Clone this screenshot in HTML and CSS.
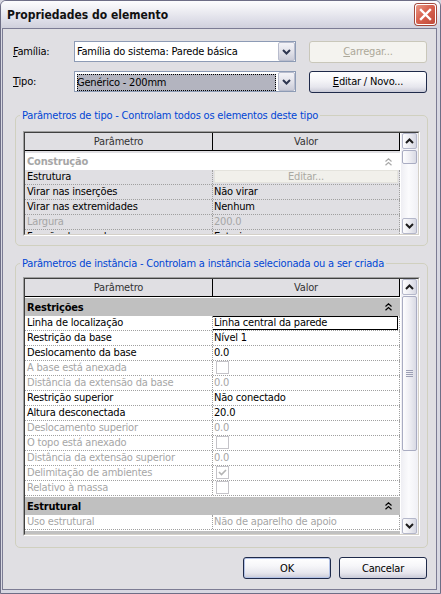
FILE: index.html
```html
<!DOCTYPE html>
<html lang="pt">
<head>
<meta charset="utf-8">
<title>Propriedades do elemento</title>
<link rel="stylesheet" href="styles.css">
</head>
<body>
<div class="window">
  <div class="titlebar">
    <span class="title">Propriedades do elemento</span>
    <span class="close"><svg width="13" height="13" viewBox="0 0 13 13"><path d="M2 2L11 11M11 2L2 11" stroke="#fff" stroke-width="2.4" stroke-linecap="square"/></svg></span>
  </div>
  <div class="client">
    <div class="form">
      <span class="lbl"><u>F</u>amília:</span>
      <div class="combo">
        <span class="combo-text">Família do sistema: Parede básica</span>
        <span class="dd"><svg width="9" height="6" viewBox="0 0 9 6"><path d="M1 1L4.5 4.5L8 1" fill="none" stroke="#2e3650" stroke-width="2"/></svg></span>
      </div>
      <button class="btn dis"><u>C</u>arregar...</button>
      <span class="lbl"><u>T</u>ipo:</span>
      <div class="combo">
        <span class="combo-text sel">Genérico - 200mm</span>
        <span class="dd"><svg width="9" height="6" viewBox="0 0 9 6"><path d="M1 1L4.5 4.5L8 1" fill="none" stroke="#2e3650" stroke-width="2"/></svg></span>
      </div>
      <button class="btn"><u>E</u>ditar / Novo...</button>
    </div>

    <fieldset class="group g1">
      <legend>Parâmetros de tipo - Controlam todos os elementos deste tipo</legend>
      <div class="grid gh1">
        <div class="gin">
          <div class="table tgray">
            <div class="hdr"><div class="hc hc1">Parâmetro</div><div class="hc hc2">Valor</div></div>
            <div class="cat cwhite dis"><span>Construção</span><svg class="chev" width="7" height="8" viewBox="0 0 7 8"><path d="M0.5 3.5L3.5 0.8L6.5 3.5M0.5 7.3L3.5 4.6L6.5 7.3" fill="none" stroke="#a8a8a8" stroke-width="1.2"/></svg></div>
            <div class="row"><div class="c1">Estrutura</div><div class="c2"><span class="editbtn">Editar...</span></div></div>
            <div class="row"><div class="c1">Virar nas inserções</div><div class="c2">Não virar</div></div>
            <div class="row"><div class="c1">Virar nas extremidades</div><div class="c2">Nenhum</div></div>
            <div class="row dis"><div class="c1">Largura</div><div class="c2">200.0</div></div>
            <div class="row"><div class="c1">Função da parede</div><div class="c2">Exterior</div></div>
          </div>
          <div class="sb">
            <span class="sbb"><svg width="9" height="6" viewBox="0 0 9 6"><path d="M1 5L4.5 1.5L8 5" fill="none" stroke="#1c1c1c" stroke-width="2"/></svg></span>
            <div class="track"><span class="thumb th1"></span></div>
            <span class="sbb"><svg width="9" height="6" viewBox="0 0 9 6"><path d="M1 1L4.5 4.5L8 1" fill="none" stroke="#1c1c1c" stroke-width="2"/></svg></span>
          </div>
        </div>
      </div>
    </fieldset>

    <fieldset class="group g2">
      <legend>Parâmetros de instância - Controlam a instância selecionada ou a ser criada</legend>
      <div class="grid gh2">
        <div class="gin">
          <div class="table twhite">
            <div class="hdr"><div class="hc hc1">Parâmetro</div><div class="hc hc2">Valor</div></div>
            <div class="cat cgray"><span>Restrições</span><svg class="chev" width="7" height="8" viewBox="0 0 7 8"><path d="M0.5 3.5L3.5 0.8L6.5 3.5M0.5 7.3L3.5 4.6L6.5 7.3" fill="none" stroke="#000" stroke-width="1.2"/></svg></div>
            <div class="row"><div class="c1">Linha de localização</div><div class="c2"><span class="editbox">Linha central da parede</span></div></div>
            <div class="row"><div class="c1">Restrição da base</div><div class="c2">Nível 1</div></div>
            <div class="row"><div class="c1">Deslocamento da base</div><div class="c2">0.0</div></div>
            <div class="row dis"><div class="c1">A base está anexada</div><div class="c2"><span class="chk"></span></div></div>
            <div class="row dis"><div class="c1">Distância da extensão da base</div><div class="c2">0.0</div></div>
            <div class="row"><div class="c1">Restrição superior</div><div class="c2">Não conectado</div></div>
            <div class="row"><div class="c1">Altura desconectada</div><div class="c2">20.0</div></div>
            <div class="row dis"><div class="c1">Deslocamento superior</div><div class="c2">0.0</div></div>
            <div class="row dis"><div class="c1">O topo está anexado</div><div class="c2"><span class="chk"></span></div></div>
            <div class="row dis"><div class="c1">Distância da extensão superior</div><div class="c2">0.0</div></div>
            <div class="row dis"><div class="c1">Delimitação de ambientes</div><div class="c2"><span class="chk"><svg width="11" height="11" viewBox="0 0 11 11"><path d="M2 5L4.5 7.5L9 3" fill="none" stroke="#b4b4b4" stroke-width="1.6"/></svg></span></div></div>
            <div class="row dis"><div class="c1">Relativo à massa</div><div class="c2"><span class="chk"></span></div></div>
            <div class="cat cgray"><span>Estrutural</span><svg class="chev" width="7" height="8" viewBox="0 0 7 8"><path d="M0.5 3.5L3.5 0.8L6.5 3.5M0.5 7.3L3.5 4.6L6.5 7.3" fill="none" stroke="#000" stroke-width="1.2"/></svg></div>
            <div class="row dis"><div class="c1">Uso estrutural</div><div class="c2">Não de aparelho de apoio</div></div>
            <div class="cat cgray"></div>
          </div>
          <div class="sb">
            <span class="sbb"><svg width="9" height="6" viewBox="0 0 9 6"><path d="M1 5L4.5 1.5L8 5" fill="none" stroke="#1c1c1c" stroke-width="2"/></svg></span>
            <div class="track"><span class="thumb th2"><span class="grip"></span></span></div>
            <span class="sbb"><svg width="9" height="6" viewBox="0 0 9 6"><path d="M1 1L4.5 4.5L8 1" fill="none" stroke="#1c1c1c" stroke-width="2"/></svg></span>
          </div>
        </div>
      </div>
    </fieldset>

    <div class="buttons">
      <button class="btn bw def">OK</button>
      <button class="btn bw">Cancelar</button>
    </div>
  </div>
</div>
</body>
</html>
```
FILE: styles.css
```css
* { box-sizing: border-box; }
html, body { margin: 0; padding: 0; }
body {
  width: 441px; height: 594px; overflow: hidden;
  background: #d6d6e0;
  font-family: "DejaVu Sans Condensed", "DejaVu Sans", sans-serif;
  font-stretch: condensed;
  font-size: 11px; line-height: 13px; color: #000;
  letter-spacing: -0.2px;
}
.window {
  width: 441px; height: 594px;
  display: flex; flex-direction: column;
  border: 1px solid #6e6e86;
  border-radius: 6px 6px 0 0;
  background: #d8d8e2;
  padding: 0 3px 3px 1px;
}
.titlebar {
  height: 27px; flex: none;
  margin: 0 -3px 0 -1px;
  padding: 0 4px 0 6px;
  display: flex; align-items: center; justify-content: space-between;
  border-radius: 5px 5px 0 0;
  background: linear-gradient(#fdfdfe 0%, #eeeef3 35%, #dedee8 70%, #d0d0dc 100%);
}
.title { font-weight: bold; font-size: 12px; line-height: 15px; color: #111; padding-top: 1px; letter-spacing: 0; }
.close {
  width: 21px; height: 21px;
  display: flex; align-items: center; justify-content: center;
  border: 1px solid #fff; border-radius: 3px;
  background: linear-gradient(135deg, #e99a88 0%, #d8624f 45%, #c04a3a 100%);
  box-shadow: 0 0 0 1px #a4493c;
}
.client {
  flex: 1; min-height: 0;
  background: #e0dfe3;
  border: 1px solid #7c7c94;
  padding: 12px 8px 0 10px;
  display: flex; flex-direction: column;
}
.form {
  display: grid;
  grid-template-columns: 61px 222px 131px;
  grid-auto-rows: 21px;
  row-gap: 9px;
  align-items: center;
}
.lbl { white-space: nowrap; }
.combo {
  height: 21px;
  display: flex; align-items: center;
  background: #fff;
  border: 1px solid #8d9bb5;
  padding: 0 0 0 2px;
}
.combo-text { flex: 1; white-space: nowrap; overflow: hidden; }
.combo-text.sel {
  height: 17px; margin: 1px 2px 0 0;
  background: #b3b4bf;
  outline: 1px dotted #000; outline-offset: -1px;
  padding: 2px 0 0 0;
}
.dd {
  width: 17px; height: 19px; flex: none;
  display: flex; align-items: center; justify-content: center;
  border: 1px solid #b8bccd; border-radius: 2px;
  background: linear-gradient(#f4f4f8, #e2e2ea 50%, #cbccd8);
}
.btn {
  height: 22px; width: 118px;
  justify-self: end;
  font: inherit; color: #000;
  letter-spacing: -0.2px;
  padding: 0;
  border: 1px solid #1f2a4a; border-radius: 3px;
  background: linear-gradient(#ffffff 0%, #f6f6f9 40%, #e6e6ed 75%, #c9cad7 100%);
}
.btn.dis {
  border-color: #c9c7ba;
  background: #f4f3ef;
  color: #aca899;
}
.btn.def { box-shadow: inset 0 0 0 1px #b3c2e6; }

.group {
  margin: 17px 0 0 2px;
  padding: 9px 7px 9px 7px;
  border: 1px solid #d0d0bf;
  border-radius: 5px;
  min-width: 0;
}
.group legend {
  color: #0046d5;
  padding: 0 2px;
  margin-left: -3px;
  line-height: 13px;
}
.g2 { margin-top: 11px; padding: 7px 7px 11px 7px; }

.grid {
  border: 1px solid;
  border-color: #a0a0a0 #fff #fff #a0a0a0;
}
.gh1 { height: 105px; }
.gh2 { height: 259px; }
.gin {
  height: 100%;
  border: 1px solid;
  border-color: #404040 #d4d0c8 #d4d0c8 #404040;
  display: flex; gap: 1px;
  background: #fff;
}
.table { width: 375px; flex: none; overflow: hidden; }
.tgray { background: #e0dfe3; }
.twhite { background: #fff; }
.hdr {
  display: flex; height: 18px;
  background: #e0dfe3;
  border-bottom: 1px solid #000;
  color: #333;
}
.hc { display: flex; align-items: center; justify-content: center; border-right: 1px solid #000; }
.hc1 { width: 188px; }
.hc2 { flex: 1; }
.cat {
  height: 19px;
  display: flex; align-items: center; justify-content: space-between;
  padding: 0 8px 0 2px;
  font-weight: bold;
}
.cwhite { background: #fff; border-top: 2px solid #e0dfe3; }
.cgray { background: #c0c0c0; border-top: 1px solid #fff; }
.row {
  display: flex; height: 15px;
  line-height: 14px;
  border-bottom: 1px dotted #a0a0a0;
  white-space: nowrap;
}
.c1 { width: 187px; flex: none; padding-left: 2px; overflow: hidden; }
.c2 {
  flex: 1; overflow: hidden;
  padding-left: 1px;
  border-left: 1px dotted #a0a0a0;
  border-right: 1px dotted #a0a0a0;
}
.dis { color: #a6a6a6; }
.editbtn {
  display: block; height: 13px; margin: 0 1px 0 0;
  line-height: 12px; text-align: center;
  background: #f1f0eb;
  border: 1px solid #e4e3dd;
  color: #aaa9a2;
}
.editbox {
  display: block; height: 14px;
  margin: 0 1px 0 -2px; padding-left: 1px;
  line-height: 12px;
  border: 1px solid #000;
}
.chk {
  display: block; width: 13px; height: 13px;
  margin: 0 0 0 2px;
  border: 1px solid #c5c4c9;
  background: #fff;
}
.chk svg { display: block; }

.sb {
  width: 17px; flex: none;
  display: flex; flex-direction: column;
  padding: 0 1px;
  background: linear-gradient(90deg, #eeeef3, #fbfbfd 45%, #f0f0f5);
}
.sbb {
  height: 16px; flex: none;
  display: flex; align-items: center; justify-content: center;
  border: 1px solid #b4b7ca; border-radius: 2px;
  background: linear-gradient(90deg, #fdfdfe, #eaeaf0 55%, #d6d7e2);
}
.track { flex: 1; display: flex; flex-direction: column; }
.thumb {
  display: flex; align-items: center; justify-content: center;
  border: 1px solid #a9acc2; border-radius: 2px;
  background: linear-gradient(90deg, #fdfdfe, #ececf2 55%, #d9dae4);
}
.th1 { margin-top: 1px; height: 14px; }
.th2 { margin-top: 1px; height: 155px; }
.grip {
  width: 7px; height: 7px;
  background: repeating-linear-gradient(#9c9fb4 0 1px, transparent 1px 2px);
}

.buttons {
  margin: 9px 1px 0 0;
  display: flex; justify-content: flex-end; gap: 8px;
}
.bw { width: 88px; }
```
